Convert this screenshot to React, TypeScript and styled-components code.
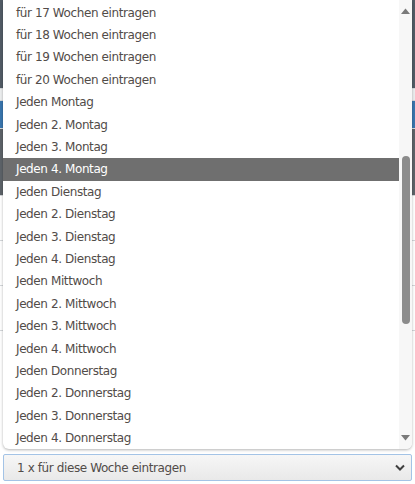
import styled, { createGlobalStyle } from 'styled-components';

const GlobalStyle = createGlobalStyle`
  html, body {
    margin: 0;
    padding: 0;
    background: #ffffff;
  }
  body {
    font-family: "DejaVu Sans", Verdana, sans-serif;
    width: 415px;
    height: 484px;
    overflow: hidden;
  }
`;

const options = [
  'für 17 Wochen eintragen',
  'für 18 Wochen eintragen',
  'für 19 Wochen eintragen',
  'für 20 Wochen eintragen',
  'Jeden Montag',
  'Jeden 2. Montag',
  'Jeden 3. Montag',
  'Jeden 4. Montag',
  'Jeden Dienstag',
  'Jeden 2. Dienstag',
  'Jeden 3. Dienstag',
  'Jeden 4. Dienstag',
  'Jeden Mittwoch',
  'Jeden 2. Mittwoch',
  'Jeden 3. Mittwoch',
  'Jeden 4. Mittwoch',
  'Jeden Donnerstag',
  'Jeden 2. Donnerstag',
  'Jeden 3. Donnerstag',
  'Jeden 4. Donnerstag',
];

const Page = styled.div`
  position: relative;
  width: 415px;
  height: 484px;
  display: flex;
  flex-direction: column;
`;

const Band = styled.div<{ $h: number; $bg: string }>`
  height: ${(p) => p.$h}px;
  background: ${(p) => p.$bg};
  border-bottom: 1px solid #d4d7da;
`;

const Content = styled.div`
  flex: 1;
  display: flex;
  flex-direction: column;
  justify-content: flex-end;
  padding: 0 3px 3px;
`;

const Select = styled.div`
  height: 27px;
  box-sizing: border-box;
  border: 1px solid #a3c3e6;
  border-radius: 2px;
  background: linear-gradient(#f6f6f6, #e9e9e9);
  display: flex;
  align-items: center;
  justify-content: space-between;
  padding: 0 6px 0 13px;
  color: #524c49;
  font-size: 12px;
  letter-spacing: -0.4px;
`;

const Dropdown = styled.div`
  position: absolute;
  left: 3px;
  top: 0;
  width: 409px;
  height: 449px;
  background: #ffffff;
  border-radius: 0 0 6px 6px;
  box-shadow: 0 1px 3px rgba(0, 0, 0, 0.3);
  display: flex;
  overflow: hidden;
`;

const List = styled.div`
  flex: 1;
  padding-top: 1.5px;
`;

const Option = styled.div<{ $active?: boolean }>`
  height: 22.42px;
  line-height: 22.42px;
  padding-left: 13px;
  font-size: 12px;
  letter-spacing: -0.4px;
  white-space: nowrap;
  color: ${(p) => (p.$active ? '#ffffff' : '#524c49')};
  background: ${(p) => (p.$active ? '#6f6f6f' : 'transparent')};
`;

const Scrollbar = styled.div`
  width: 13px;
  background: #f7f7f7;
  display: flex;
  flex-direction: column;
  align-items: center;
  justify-content: space-between;
  padding: 8px 0 8px;
  box-sizing: border-box;
`;

const Track = styled.div`
  flex: 1;
  width: 100%;
  display: flex;
  justify-content: center;
  padding-top: 142px;
  padding-bottom: 111px;
`;

const Thumb = styled.div`
  width: 8px;
  border-radius: 4px;
  background: #8c8c8c;
`;

function Arrow({ up }: { up?: boolean }) {
  return (
    <svg width="9" height="6" viewBox="0 0 9 6">
      <path d={up ? 'M0 6 L4.5 0.5 L9 6 Z' : 'M0 0 L4.5 5.5 L9 0 Z'} fill="#7a7a7a" />
    </svg>
  );
}

function Chevron() {
  return (
    <svg width="10" height="7" viewBox="0 0 10 7">
      <path d="M1 1.5 L5 5.5 L9 1.5" fill="none" stroke="#3f3f3f" strokeWidth="2" />
    </svg>
  );
}

export default function App() {
  return (
    <Page>
      <GlobalStyle />
      <Band $h={88} $bg="#525c66" />
      <Band $h={11} $bg="#eceeef" />
      <Band $h={27} $bg="#3a76ae" />
      <Band $h={66} $bg="#5d6369" />
      <Band $h={44} $bg="#ffffff" />
      <Band $h={44} $bg="#ffffff" />
      <Band $h={44} $bg="#ffffff" />
      <Content>
        <Select>
          <span>1 x für diese Woche eintragen</span>
          <Chevron />
        </Select>
      </Content>
      <Dropdown>
        <List>
          {options.map((o) => (
            <Option key={o} $active={o === 'Jeden 4. Montag'}>
              {o}
            </Option>
          ))}
        </List>
        <Scrollbar>
          <Arrow up />
          <Track>
            <Thumb />
          </Track>
          <Arrow />
        </Scrollbar>
      </Dropdown>
    </Page>
  );
}
